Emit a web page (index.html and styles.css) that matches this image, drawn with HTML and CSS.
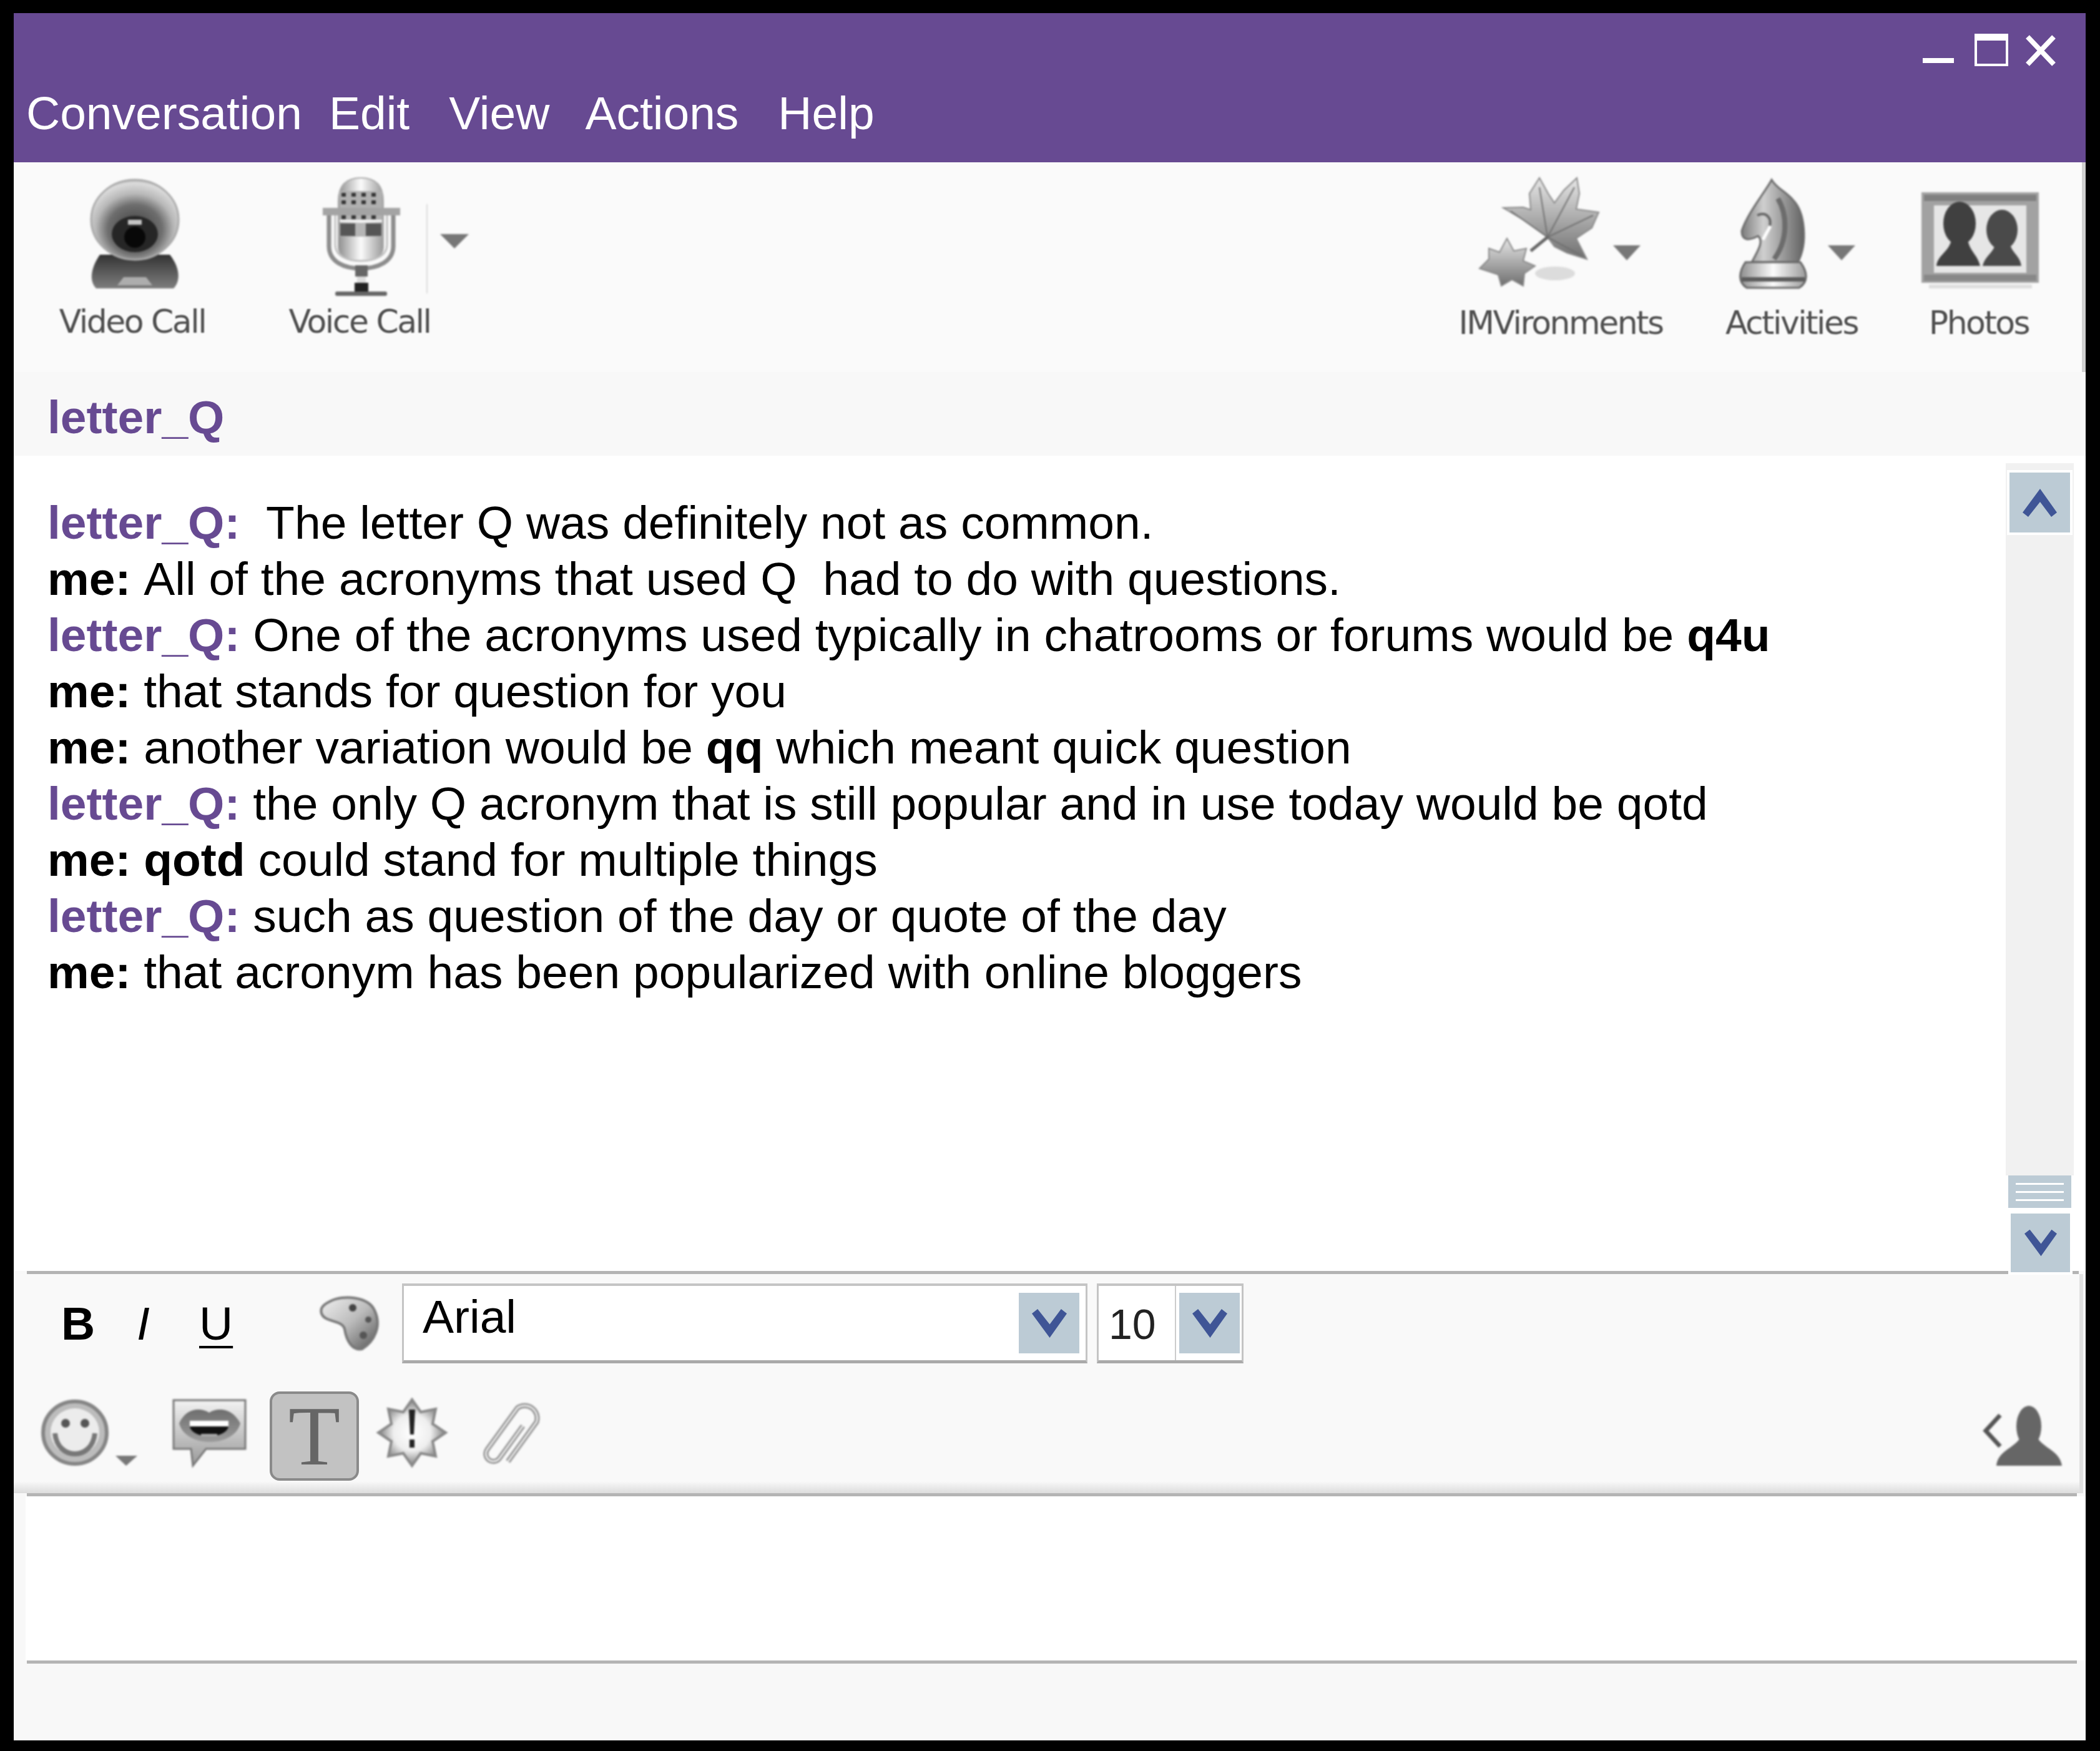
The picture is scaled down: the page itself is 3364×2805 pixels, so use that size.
FILE: index.html
```html
<!DOCTYPE html>
<html lang="en">
<head>
<meta charset="utf-8">
<title>Conversation</title>
<link rel="stylesheet" href="styles.css">
</head>
<body>
<div class="window">
  <header class="titlebar">
    <svg class="winctl" viewBox="3070 40 240 80" width="240" height="80">
      <rect x="3080" y="93" width="50" height="8" fill="#fff"/>
      <rect x="3165" y="56" width="50" height="48" fill="none" stroke="#fff" stroke-width="4"/>
      <rect x="3163" y="54" width="54" height="11" fill="#fff"/>
      <path d="M3248 59 L3290 103 M3290 59 L3248 103" stroke="#fff" stroke-width="8" fill="none"/>
    </svg>
    <nav class="menu">
      <span class="menu-first">Conversation</span>
      <span class="menu-edit">Edit</span>
      <span class="menu-view">View</span>
      <span class="menu-actions">Actions</span>
      <span>Help</span>
    </nav>
  </header>

  <section class="toolbar">
    <div class="tool tool-video">
      <svg class="ico" viewBox="60 280 304 200" width="304" height="200">
        <defs>
          <linearGradient id="gV" x1="0" y1="0" x2="0" y2="1"><stop offset="0" stop-color="#e6e6e6"/><stop offset="1" stop-color="#6f6f6f"/></linearGradient>
          <linearGradient id="gH" x1="0" y1="0" x2="1" y2="0"><stop offset="0" stop-color="#8f8f8f"/><stop offset=".5" stop-color="#fbfbfb"/><stop offset="1" stop-color="#9a9a9a"/></linearGradient>
          <linearGradient id="gKnight" x1="0" y1="0" x2="1" y2="0"><stop offset="0" stop-color="#7c7c7c"/><stop offset=".35" stop-color="#cfcfcf"/><stop offset="1" stop-color="#626262"/></linearGradient>
          <linearGradient id="gPal" x1="0" y1="0" x2="1" y2="1"><stop offset="0" stop-color="#f0f0f0"/><stop offset=".5" stop-color="#bcbcbc"/><stop offset="1" stop-color="#555"/></linearGradient>
          <linearGradient id="gDark" x1="0" y1="0" x2="0" y2="1"><stop offset="0" stop-color="#333"/><stop offset="1" stop-color="#7e7e7e"/></linearGradient>
          <linearGradient id="gBub" x1="0" y1="0" x2="0" y2="1"><stop offset="0" stop-color="#f2f2f2"/><stop offset="1" stop-color="#999"/></linearGradient>
          <linearGradient id="gLip" x1="0" y1="0" x2="0" y2="1"><stop offset="0" stop-color="#6e6e6e"/><stop offset="1" stop-color="#9c9c9c"/></linearGradient>
          <radialGradient id="gBody" cx=".5" cy=".62" r=".62"><stop offset="0" stop-color="#3c3c3c"/><stop offset=".5" stop-color="#6e6e6e"/><stop offset=".72" stop-color="#b8b8b8"/><stop offset=".94" stop-color="#dcdcdc"/><stop offset="1" stop-color="#a8a8a8"/></radialGradient>
          <radialGradient id="gBurst"><stop offset="0" stop-color="#fff"/><stop offset=".55" stop-color="#eee"/><stop offset="1" stop-color="#7e7e7e"/></radialGradient>
        </defs>
        <path d="M160 408 C146 428 142 450 154 462 L278 462 C290 450 288 428 272 408 Z" fill="url(#gDark)"/>
        <polygon points="198,444 234,444 244,457 188,457" fill="#adadad"/>
        <ellipse cx="216" cy="352" rx="70" ry="64" fill="url(#gBody)" stroke="#aaa" stroke-width="3"/>
        <ellipse cx="216" cy="375" rx="37" ry="29" fill="#262626"/>
        <ellipse cx="216" cy="380" rx="17" ry="17" fill="#080808"/>
        <rect x="205" y="352" width="22" height="8" fill="#c4c4c4"/>
      </svg>
      <span class="tool-label">Video Call</span>
    </div>
    <div class="tool tool-voice">
      <svg class="ico" viewBox="400 280 360 200" width="360" height="200">
        <path d="M542 322 C542 296 556 285 578 285 C600 285 614 296 614 322 L614 396 C614 410 600 418 578 418 C556 418 542 410 542 396 Z" fill="url(#gH)" stroke="#aaa" stroke-width="2"/>
        <rect x="544" y="306" width="68" height="46" fill="#b0b0b0"/>
        <path d="M547 312 H610 M547 324 H610 M547 336 H610 M547 348 H610" stroke="#333" stroke-width="6" stroke-dasharray="7 9" fill="none"/>
        <rect x="544" y="352" width="68" height="4" fill="#f2f2f2"/>
        <rect x="544" y="357" width="68" height="22" fill="#b5b5b5"/>
        <rect x="545" y="358" width="24" height="20" fill="#555"/>
        <rect x="586" y="358" width="25" height="20" fill="#555"/>
        <rect x="517" y="333" width="124" height="12" fill="#a4a4a4"/>
        <path d="M527 345 V394 C527 420 552 430 578 430 C604 430 630 420 630 394 V345" fill="none" stroke="#8c8c8c" stroke-width="7"/>
        <path d="M537 345 V392 C537 410 556 418 578 418 C600 418 620 410 620 392 V345" fill="none" stroke="#c0c0c0" stroke-width="3"/>
        <rect x="569" y="425" width="20" height="18" fill="#666"/>
        <rect x="572" y="443" width="14" height="11" fill="#ddd"/>
        <rect x="568" y="453" width="22" height="16" fill="#222"/>
        <rect x="537" y="467" width="83" height="7" rx="3" fill="#666"/>
        <rect x="683" y="327" width="2" height="143" fill="#ddd"/>
        <polygon points="705,375 751,375 728,398" fill="#777"/>
      </svg>
      <span class="tool-label">Voice Call</span>
    </div>
    <div class="tool tool-imv tool-right">
      <svg class="ico" viewBox="2300 280 400 200" width="400" height="200">
        <ellipse cx="2491" cy="438" rx="32" ry="11" fill="#dcdcdc"/>
        <polygon points="2479,380 2440,352 2408,333 2440,332 2452,336 2450,310 2466,285 2480,310 2490,325 2505,305 2526,285 2530,310 2525,335 2561,340 2550,365 2525,382 2542,415 2510,405 2490,395" fill="url(#gV)" stroke="#888" stroke-width="2"/>
        <path d="M2479 380 L2466 300 M2479 380 L2522 300 M2479 380 L2420 338 M2479 380 L2552 345 M2479 380 L2535 410" stroke="#707070" stroke-width="2" fill="none"/>
        <path d="M2479 380 L2452 402" stroke="#666" stroke-width="5" fill="none"/>
        <polygon points="2414,382 2425,402 2445,398 2440,418 2459,426 2442,438 2440,458 2422,448 2405,458 2400,440 2370,430 2385,415 2385,398 2402,404" fill="url(#gV)" stroke="#888" stroke-width="2"/>
        <polygon points="2584,393 2628,393 2606,417" fill="#777"/>
      </svg>
      <span class="tool-label">IMVironments</span>
    </div>
    <div class="tool tool-act tool-right">
      <svg class="ico" viewBox="2740 280 260 200" width="260" height="200">
        <path d="M2838 288 C2826 310 2800 340 2790 370 C2790 386 2802 386 2816 378 C2826 386 2816 402 2806 420 L2880 420 C2896 390 2892 340 2872 320 C2860 306 2846 302 2838 288 Z" fill="url(#gKnight)" stroke="#6c6c6c" stroke-width="3"/>
        <path d="M2848 318 C2864 345 2864 385 2842 415" stroke="#6c6c6c" stroke-width="8" fill="none"/>
        <path d="M2815 345 C2830 338 2838 350 2835 362" stroke="#666" stroke-width="4" fill="none"/>
        <path d="M2836 362 L2824 384" stroke="#fff" stroke-width="5" fill="none"/>
        <path d="M2796 420 C2785 436 2784 452 2798 461 L2882 461 C2897 452 2896 436 2884 420 Z" fill="url(#gH)" stroke="#666" stroke-width="3"/>
        <rect x="2790" y="444" width="101" height="7" fill="#5c5c5c"/>
        <polygon points="2928,393 2972,393 2950,417" fill="#777"/>
      </svg>
      <span class="tool-label">Activities</span>
    </div>
    <div class="tool tool-photos tool-right">
      <svg class="ico" viewBox="3060 280 220 200" width="220" height="200">
        <rect x="3078" y="308" width="188" height="145" fill="#a2a2a2"/>
        <rect x="3082" y="312" width="180" height="10" fill="#808080"/>
        <rect x="3082" y="440" width="180" height="10" fill="#888"/>
        <rect x="3098" y="329" width="148" height="108" fill="#e6e6e6"/>
        <ellipse cx="3139" cy="358" rx="26" ry="35" fill="#404040"/>
        <path d="M3102 426 C3104 408 3122 404 3126 384 H3152 C3156 404 3168 408 3172 426 Z" fill="#404040"/>
        <ellipse cx="3207" cy="368" rx="25" ry="32" fill="#4a4a4a"/>
        <path d="M3176 426 C3180 410 3192 406 3196 392 H3220 C3224 406 3236 410 3238 426 Z" fill="#4a4a4a"/>
        <rect x="3090" y="456" width="165" height="6" fill="#dedede"/>
      </svg>
      <span class="tool-label">Photos</span>
    </div>
  </section>

  <div class="buddy">letter_Q</div>

  <section class="chat">
    <div class="log">
      <p><b class="them">letter_Q:</b>&nbsp; The letter Q was definitely not as common.</p>
      <p><b>me:</b> All of the acronyms that used Q&nbsp; had to do with questions.</p>
      <p><b class="them">letter_Q:</b> One of the acronyms used typically in chatrooms or forums would be <b>q4u</b></p>
      <p><b>me:</b> that stands for question for you</p>
      <p><b>me:</b> another variation would be <b>qq</b> which meant quick question</p>
      <p><b class="them">letter_Q:</b> the only Q acronym that is still popular and in use today would be qotd</p>
      <p><b>me: qotd</b> could stand for multiple things</p>
      <p><b class="them">letter_Q:</b> such as question of the day or quote of the day</p>
      <p><b>me:</b> that acronym has been popularized with online bloggers</p>
    </div>
    <div class="scroll">
      <div class="track">
        <button class="sbtn"><svg viewBox="0 0 55 45" width="55" height="45"><polygon points="28,0 55,38 46,45 28,21 9,45 0,38" fill="#3f5596"/></svg></button>
      </div>
      <div class="thumb"><i></i><i></i><i></i></div>
      <button class="sbtn sbtn-down"><svg viewBox="0 0 55 45" width="52" height="48"><polygon points="28,45 55,7 46,0 28,24 9,0 0,7" fill="#3f5596"/></svg></button>
    </div>
  </section>

  <div class="rule rule-top"></div>

  <section class="format">
    <div class="fmt-row1">
      <span class="fmt fmt-b">B</span>
      <span class="fmt fmt-i">I</span>
      <span class="fmt fmt-u">U</span>
      <svg class="ico fmt-pal" viewBox="510 2075 102 92" width="102" height="92">
        <path d="M530 2085 C550 2075 590 2078 600 2100 C612 2125 600 2150 580 2162 C565 2165 555 2150 552 2130 C548 2115 520 2120 515 2105 C512 2095 520 2090 530 2085 Z" fill="url(#gPal)" stroke="#777" stroke-width="4"/>
        <circle cx="565" cy="2096" r="6" fill="#444"/><circle cx="590" cy="2115" r="5" fill="#555"/><circle cx="582" cy="2140" r="6" fill="#555"/>
      </svg>
      <div class="select select-font">
        <span class="select-value">Arial</span>
        <button class="dd"><svg viewBox="0 0 55 45" width="56" height="46"><polygon points="28,45 55,7 46,0 28,24 9,0 0,7" fill="#3f5596"/></svg></button>
      </div>
      <div class="select select-size">
        <span class="select-num">10</span>
        <button class="dd"><svg viewBox="0 0 55 45" width="56" height="46"><polygon points="28,45 55,7 46,0 28,24 9,0 0,7" fill="#3f5596"/></svg></button>
      </div>
    </div>
    <div class="fmt-row2">
      <svg class="ico" viewBox="60 2225 370 150" width="370" height="150">
        <ellipse cx="120" cy="2295" rx="51" ry="50" fill="#bcbcbc" stroke="#858585" stroke-width="6"/>
        <ellipse cx="120" cy="2294" rx="39" ry="38" fill="#ececec"/>
        <circle cx="105" cy="2280" r="7" fill="#555"/><circle cx="136" cy="2280" r="7" fill="#555"/>
        <path d="M88 2296 C92 2340 148 2340 152 2296" fill="none" stroke="#777" stroke-width="8"/>
        <polygon points="185,2332 220,2332 202,2348" fill="#777"/>
        <path d="M278 2243 H393 V2321 H330 L309 2348 L306 2321 H278 Z" fill="url(#gBub)" stroke="#777" stroke-width="3"/>
        <path d="M287 2280 C298 2256 320 2254 335 2263 C350 2254 372 2256 385 2280 C375 2320 297 2320 287 2280 Z" fill="url(#gLip)"/>
        <rect x="304" y="2276" width="62" height="9" fill="#fff"/>
        <path d="M304 2285 H366 C362 2306 308 2306 304 2285 Z" fill="#111"/>
        <rect x="322" y="2297" width="26" height="4" fill="#aaa"/>
      </svg>
      <div class="tbtn">T</div>
      <svg class="ico" viewBox="575 2225 300 150" width="300" height="150">
        <polygon points="660,2242 674,2262 698,2257 693,2281 714,2295 693,2309 698,2333 674,2328 660,2348 646,2328 622,2333 627,2309 606,2295 627,2281 622,2257 646,2262" fill="url(#gBurst)" stroke="#888" stroke-width="4"/>
        <polygon points="655,2258 665,2258 663,2298 657,2298" fill="#222"/>
        <rect x="656" y="2306" width="8" height="13" fill="#222"/>
        <g transform="translate(815 2295) rotate(36)" fill="none">
          <path d="M12 -22 V42 A12 12 0 0 1 -12 42 V-40 A20 20 0 0 1 26 -40 V38" stroke="#8c8c8c" stroke-width="8"/>
          <path d="M12 -22 V42 A12 12 0 0 1 -12 42 V-40 A20 20 0 0 1 26 -40 V38" stroke="#ececec" stroke-width="3"/>
        </g>
      </svg>
      <svg class="ico fmt-person" viewBox="3170 2245 140 110" width="140" height="110">
        <ellipse cx="3250" cy="2285" rx="20" ry="33" fill="#666"/>
        <path d="M3198 2348 C3200 2325 3225 2320 3235 2305 H3265 C3275 2320 3300 2325 3303 2348 Z" fill="#666"/>
        <polyline points="3204,2267 3181,2292 3204,2317" fill="none" stroke="#555" stroke-width="7"/>
      </svg>
    </div>
  </section>

  <div class="rule"></div>
  <div class="input"></div>
  <div class="rule"></div>
  <div class="foot"></div>
</div>
</body>
</html>
```

FILE: styles.css
```css
* { box-sizing: border-box; }
html, body { margin: 0; padding: 0; }
body {
  width: 3364px;
  height: 2805px;
  padding: 21px 23px 17px 22px;
  background: #000;
  font-family: "Liberation Sans", Arial, sans-serif;
  font-size: 75px;
  color: #000;
  overflow: hidden;
}
.window {
  display: flex;
  flex-direction: column;
  height: 100%;
  background: #f8f8f8;
}

/* title */
.titlebar {
  display: flex;
  flex-direction: column;
  flex: none;
  height: 239px;
  padding-top: 19px;
  background: #674a92;
  color: #fff;
}
.winctl { align-self: flex-end; margin-right: 31px; }
.menu {
  display: flex;
  margin-top: 16px;
  padding-left: 20px;
  line-height: 90px;
}
.menu-first { margin-right: 43px; }
.menu-edit { margin-right: 63px; }
.menu-view { margin-right: 57px; }
.menu-actions { margin-right: 63px; }

/* top toolbar */
.toolbar {
  display: flex;
  flex: none;
  height: 336px;
  padding: 20px 61px 0 38px;
  background: #fafafa;
  border-right: 6px solid #d0d0d0;
}
.tool { display: flex; flex-direction: column; }
.tool-video { width: 304px; margin-right: 36px; }
.tool-voice { width: 360px; }
.tool-imv { width: 400px; margin-left: auto; margin-right: 40px; }
.tool-act { width: 260px; margin-right: 60px; }
.tool-photos { width: 220px; margin-right: -6px; }
.tool-voice .tool-label { padding-right: 8px; }
.ico { display: block; flex: none; filter: blur(1.8px); overflow: visible; }
.tool-label {
  display: block;
  font-family: "DejaVu Sans", sans-serif;
  font-size: 52px;
  letter-spacing: -2.5px;
  line-height: 70px;
  text-align: center;
  color: #4f4f4f;
  filter: blur(1.3px);
}
.tool-right .tool-label { padding-top: 2px; }

/* buddy */
.buddy {
  flex: none;
  height: 134px;
  padding-left: 54px;
  line-height: 145px;
  font-weight: 700;
  color: #674a92;
  background: #f8f8f8;
}

/* chat */
.chat {
  display: flex;
  flex: none;
  height: 1306px;
  background: #fff;
}
.log { flex: 1; padding: 62px 0 0 54px; font-kerning: none; }
.log p { margin: 0; line-height: 90px; }
.them { color: #674a92; }
.scroll {
  display: flex;
  flex: none;
  flex-direction: column;
  position: relative;
  z-index: 1;
  width: 109px;
  margin: 12px 19px -6px 0;
}
.track {
  flex: 1;
  padding: 11px 2px 0;
  background: #f1f1f1;
}
.sbtn, .dd {
  display: flex;
  align-items: center;
  justify-content: center;
  padding: 0;
  background: #bccbd5;
  border: 4px solid #fff;
}
.sbtn { width: 105px; height: 104px; }
.thumb {
  display: flex;
  flex: none;
  flex-direction: column;
  justify-content: center;
  gap: 10px;
  width: 101px;
  height: 52px;
  margin: 0 0 5px 4px;
  padding: 0 12px;
  background: #bccbd5;
}
.thumb i { display: block; height: 3px; background: #fff; }
.sbtn-down { width: 103px; height: 102px; margin-left: 4px; }

/* rules */
.rule {
  flex: none;
  height: 5px;
  margin: 0 14px 0 21px;
  background: #b4b4b4;
  filter: blur(.7px);
}
.rule-top { margin-right: 11px; }

/* format bar */
.format {
  flex: none;
  height: 351px;
  margin-right: 4px;
  background: #f9f9f9;
  border-right: 6px solid #e0e0e0;
}
.fmt-row1 {
  display: flex;
  align-items: center;
  height: 162px;
  padding: 15px 0 19px 76px;
}
.fmt { display: block; line-height: 1; }
.fmt-b { width: 121px; font-weight: 700; }
.fmt-i { width: 100px; font-style: italic; }
.fmt-u {
  width: 195px;
  text-decoration: underline;
  text-decoration-thickness: 4px;
  text-underline-offset: 10px;
}
.fmt-pal { margin-left: -4px; margin-right: 32px; }
.select {
  display: flex;
  align-items: center;
  height: 128px;
  background: #fff;
  border: 3px solid #c4c4c4;
  border-top-width: 4px;
  border-bottom-width: 5px;
  border-bottom-color: #aaa;
}
.select-font { width: 1098px; }
.select-size { width: 235px; margin-left: 15px; }
.select-value {
  flex: 1;
  align-self: flex-start;
  padding-left: 30px;
  line-height: 98px;
}
.select-num {
  width: 124px;
  padding-left: 16px;
  border-right: 2px solid #ccc;
  height: 100%;
  line-height: 122px;
  font-size: 68px;
  color: #222;
  filter: blur(.5px);
}
.dd { flex: none; width: 103px; height: 103px; margin-right: 7px; border-width: 3px; }
.select-size .dd { margin-right: 0; margin-left: 2px; }
.fmt-row2 {
  display: flex;
  align-items: center;
  height: 189px;
  padding: 5px 21px 0 38px;
  background: linear-gradient(to bottom, transparent 90%, #dcdcdc);
}
.tbtn {
  flex: none;
  width: 143px;
  height: 143px;
  margin: 0 0 0 2px;
  background: #c2c2c2;
  border: 4px solid #8a8a8a;
  border-radius: 16px;
  font-family: "Liberation Serif", serif;
  font-size: 136px;
  line-height: 135px;
  text-align: center;
  color: #666;
  filter: blur(.6px);
}
.fmt-person { margin-left: auto; }

/* input */
.input { flex: none; height: 263px; background: #fff; margin-left: 19px; }
.foot { flex: 1; background: #f8f8f8; }
```
